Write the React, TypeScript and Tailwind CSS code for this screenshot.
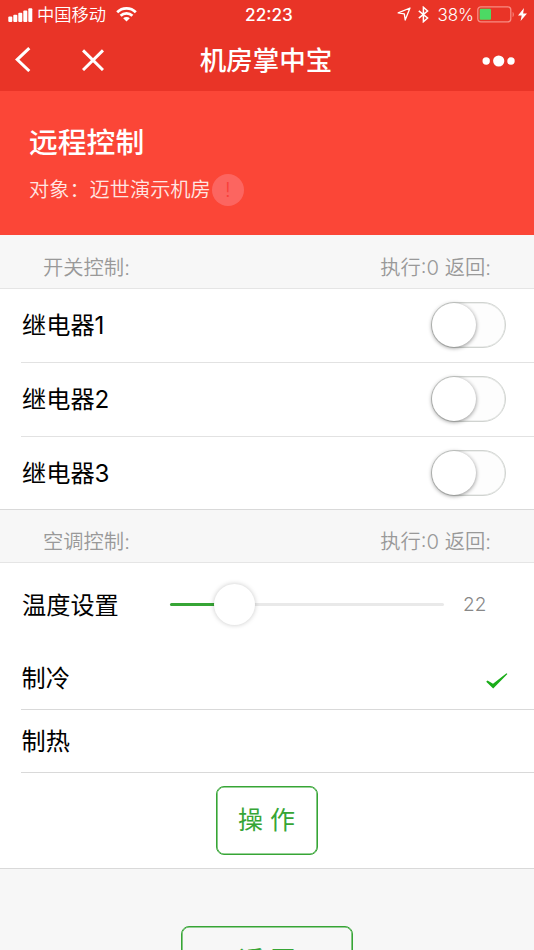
import { useState } from 'react'
import { clsx } from 'clsx'

const relays = ['继电器1', '继电器2', '继电器3']
const modes = ['制冷', '制热']

function StatusBar() {
  return (
    <div className="grid h-[30px] grid-cols-3 items-center pl-2 pr-[7px] leading-[30px]">
      <div className="flex items-center">
        <svg className="h-[14px] w-[25px]" viewBox="0 0 25 14" fill="currentColor">
          <rect x="0.3" y="8.5" width="4" height="5.5" rx="1" />
          <rect x="5.3" y="6.8" width="4" height="7.2" rx="1" />
          <rect x="10.3" y="4.8" width="4" height="9.2" rx="1" />
          <rect x="15.3" y="2.5" width="4" height="11.5" rx="1" />
          <rect x="20.3" y="0.2" width="4" height="13.8" rx="1" />
        </svg>
        <span className="ml-1 text-[17.3px] font-[350]">中国移动</span>
        <svg className="ml-[10px] h-[15px] w-[21px] -translate-y-px" viewBox="0 0 21 15" fill="none" stroke="currentColor" strokeWidth="2.8">
          <path d="M1.2 5.3a13.2 13.2 0 0 1 18.6 0" />
          <path d="M4.6 8.8a8.4 8.4 0 0 1 11.8 0" />
          <path d="M10.5 14.5 7.2 11.3a4.7 4.7 0 0 1 6.6 0Z" fill="currentColor" stroke="none" />
        </svg>
      </div>
      <p className="pl-[3px] text-center text-[17.2px] font-medium">22:23</p>
      <div className="flex items-center justify-end">
        <svg className="h-[14px] w-[14px] -translate-y-px" viewBox="0 0 14 14" fill="none" stroke="currentColor" strokeWidth="1.3" strokeLinejoin="round">
          <path d="M13 1 1.2 5.9 7.3 6.9 8.2 13Z" />
        </svg>
        <svg className="ml-[7px] h-[17px] w-[11px] -translate-y-px" viewBox="0 0 11 17" fill="none" stroke="currentColor" strokeWidth="1.5">
          <path d="M.8 4.8 9.6 12 5.4 15.7V1.3L9.6 5 .8 12.2" />
        </svg>
        <span className="ml-[8px] text-[17px] font-light">38%</span>
        <svg className="ml-[3px] h-[17px] w-[38px] -translate-y-px" viewBox="0 0 38 17" fill="none">
          <rect x="0.8" y="0.8" width="33" height="15" rx="3" stroke="#f78c83" strokeWidth="1.3" />
          <path d="M35.6 6v5c1.6-.5 1.6-4.5 0-5Z" fill="#f78c83" />
          <rect x="2.7" y="2.8" width="11.3" height="11" rx="1" fill="#4cd964" />
        </svg>
        <svg className="ml-[3px] h-[13px] w-[9px] -translate-y-px" viewBox="0 0 9 13" fill="currentColor">
          <path d="M6 0 0 7.4h3.7L2.6 13 9 5.4H5.1Z" />
        </svg>
      </div>
    </div>
  )
}

function NavBar() {
  return (
    <div className="grid h-[61px] grid-cols-3 items-center pl-[15px] pr-[19px]">
      <div className="-mt-[2px] flex items-center gap-[51px]">
        <svg className="h-[25px] w-[16px]" viewBox="0 0 16 25" fill="none" stroke="currentColor" strokeWidth="3">
          <path d="M14.3 1.2 2.2 12.6 14.3 24" />
        </svg>
        <svg className="h-[22px] w-[22px]" viewBox="0 0 22 22" fill="none" stroke="currentColor" strokeWidth="3">
          <path d="M1 1.4 21 21M21 1.4 1 21" />
        </svg>
      </div>
      <h1 className="-mt-[2px] pl-[2px] text-center text-[26.5px] font-medium leading-[60px] whitespace-nowrap">机房掌中宝</h1>
      <svg className="h-3 w-[33px] justify-self-end" viewBox="0 0 33 12" fill="currentColor">
        <circle cx="4.2" cy="6" r="3.7" />
        <circle cx="16.7" cy="6" r="5.6" />
        <circle cx="29" cy="6" r="3.7" />
      </svg>
    </div>
  )
}

function SectionTitle({ title, className }: { title: string; className: string }) {
  return (
    <div
      className={clsx(
        'flex items-center justify-between border-b border-[#e5e5e5] bg-[#f7f7f7] px-[43px] text-[20.3px] font-[350] text-[#999]',
        className,
      )}
    >
      <span>{title}</span>
      <span>执行:0 返回:</span>
    </div>
  )
}

function Switch({ checked, onChange }: { checked: boolean; onChange: () => void }) {
  return (
    <button
      aria-checked={checked}
      className={clsx(
        'h-[46px] w-[75px] rounded-full border border-[#d0d3d0] shadow-[inset_0_0_0_0.5px_#dfe2df]',
        checked ? 'bg-[#1aad19]' : 'bg-[#fdfdfd]',
      )}
      onClick={onChange}
      role="switch"
    >
      <span
        className={clsx(
          'block h-[44px] w-[44px] rounded-full bg-white shadow-[0_1px_4px_rgba(0,0,0,0.45)]',
          checked && 'translate-x-7',
        )}
      />
    </button>
  )
}

export default function App() {
  const [active, setActive] = useState<string[]>([])
  const [mode, setMode] = useState('制冷')
  const temperature = 22

  const toggle = (name: string) =>
    setActive((list) => (list.includes(name) ? list.filter((item) => item !== name) : [...list, name]))

  return (
    <div className="h-[950px] w-[534px] overflow-hidden bg-[#f7f7f7] font-['Inter','Noto_Sans_CJK_SC',sans-serif] text-black">
      <header className="bg-[#e93427] text-white">
        <StatusBar />
        <NavBar />
      </header>

      <section className="h-36 bg-[#fb4637] pl-[29px] pt-[31px] text-white">
        <h2 className="text-[28.8px] font-medium leading-[42px]">远程控制</h2>
        <div className="mt-[10px] flex items-center text-[20.2px] font-[350] leading-8 text-[#ffe6e3]">
          <span className="-mt-px">对象：迈世演示机房</span>
          <span className="ml-px grid h-8 w-8 place-items-center rounded-full bg-[#fc6560] text-[20px] text-[#f83e3a]">!</span>
        </div>
      </section>

      <SectionTitle className="h-[54px] pt-[13px]" title="开关控制:" />
      <div className="border-b border-[#d9d9d9] bg-white pl-[21px]">
        {relays.map((name) => (
          <div
            className="flex h-[74px] items-center justify-between border-b border-[#e2e2e2] pb-px pl-px pr-7 text-[24.2px] last:h-[72px] last:border-b-0 last:pb-0"
            key={name}
          >
            <span className="pt-[3px]">{name}</span>
            <Switch checked={active.includes(name)} onChange={() => toggle(name)} />
          </div>
        ))}
      </div>

      <SectionTitle className="h-[53px] pt-[12px]" title="空调控制:" />
      <div className="border-b border-[#d9d9d9] bg-white">
        <div className="flex h-[84px] items-center pl-[22px]">
          <span className="w-[148px] pt-[2px] text-[24.2px]">温度设置</span>
          <div className="relative -mt-px h-[3px] w-[274px] rounded-full bg-[#e9e9e9]">
            <div className="h-[3px] w-[50px] rounded-full bg-[#36a535]" />
            <div className="absolute -top-[19px] left-11 h-[41px] w-[41px] rounded-full bg-white shadow-[0_0_5px_rgba(0,0,0,0.22)]" />
          </div>
          <span className="ml-[19px] text-[19px] font-[350] text-[#888]">{temperature}</span>
        </div>
        {modes.map((name) => (
          <div
            className="ml-[21px] flex h-[63px] items-center justify-between border-b border-[#d9d9d9] pl-[0.5px] pr-[26px] text-[24.2px]"
            key={name}
            onClick={() => setMode(name)}
          >
            <span className="pt-[2px]">{name}</span>
            {mode === name && (
              <svg className="mt-[5px] h-4 w-[22px]" viewBox="0 0 22 16" fill="#1aad19">
                <path d="M.2 8.8 1.5 7.4 7 10.8 20.5.2 21.4 1.1 7.2 15.4Z" />
              </svg>
            )}
          </div>
        ))}
        <div className="flex h-[95px] justify-center pt-[13px]">
          <button className="h-[69px] w-[102px] rounded-lg border border-[#36a535] pr-px text-[25px] text-[#36a535] shadow-[inset_0_0_0_0.6px_#36a535]">
            操 作
          </button>
        </div>
      </div>

      <div className="flex justify-center pt-[57px]">
        <button className="h-[69px] w-[172px] rounded-lg border border-[#36a535] text-[25px] text-[#36a535] shadow-[inset_0_0_0_0.6px_#36a535]">
          返 回
        </button>
      </div>
    </div>
  )
}
